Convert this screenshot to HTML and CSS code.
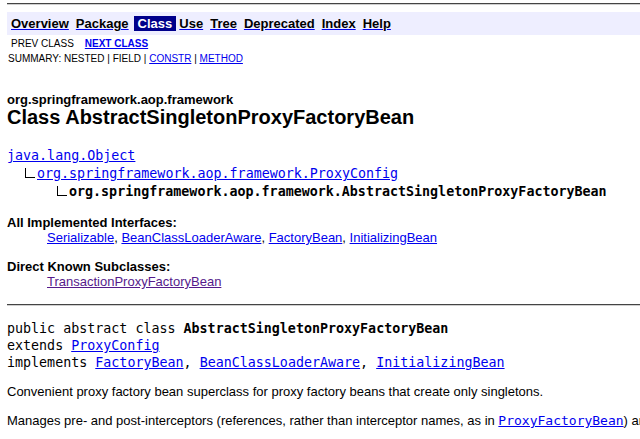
FILE: index.html
```html
<!DOCTYPE html>
<html>
<head>
<meta charset="utf-8">
<title>AbstractSingletonProxyFactoryBean</title>
<link rel="stylesheet" href="styles.css">
</head>
<body>
<div class="page">
  <hr class="rule rule-top">
  <nav class="navbar">
    <a class="nav-link" href="#"><span>Overview</span></a>
    <a class="nav-link" href="#"><span>Package</span></a>
    <span class="nav-cur">Class</span>
    <a class="nav-link" href="#"><span>Use</span></a>
    <a class="nav-link" href="#"><span>Tree</span></a>
    <a class="nav-link" href="#"><span>Deprecated</span></a>
    <a class="nav-link" href="#"><span>Index</span></a>
    <a class="nav-link" href="#"><span>Help</span></a>
  </nav>
  <div class="subnav">
    <span>PREV CLASS</span>
    <a class="next" href="#">NEXT CLASS</a>
  </div>
  <div class="summary">SUMMARY:&nbsp;NESTED&nbsp;|&nbsp;FIELD&nbsp;|&nbsp;<a href="#">CONSTR</a>&nbsp;|&nbsp;<a href="#">METHOD</a></div>

  <div class="pkg">org.springframework.aop.framework</div>
  <h2 class="title">Class AbstractSingletonProxyFactoryBean</h2>

  <div class="tree">
    <div class="tree-row"><a href="#">java.lang.Object</a></div>
    <div class="tree-row tree-l1"><span class="elbow"></span><a href="#">org.springframework.aop.framework.ProxyConfig</a></div>
    <div class="tree-row tree-l2"><span class="elbow"></span><b>org.springframework.aop.framework.AbstractSingletonProxyFactoryBean</b></div>
  </div>

  <dl class="meta">
    <dt>All Implemented Interfaces:</dt>
    <dd><a href="#">Serializable</a>, <a href="#">BeanClassLoaderAware</a>, <a href="#">FactoryBean</a>, <a href="#">InitializingBean</a></dd>
  </dl>
  <dl class="meta meta-next">
    <dt>Direct Known Subclasses:</dt>
    <dd><a class="visited" href="#">TransactionProxyFactoryBean</a></dd>
  </dl>

  <hr class="rule rule-mid">

  <div class="decl">
    <div>public abstract class <b>AbstractSingletonProxyFactoryBean</b></div>
    <div>extends <a href="#">ProxyConfig</a></div>
    <div>implements <a href="#">FactoryBean</a>, <a href="#">BeanClassLoaderAware</a>, <a href="#">InitializingBean</a></div>
  </div>

  <p class="desc">Convenient proxy factory bean superclass for proxy factory beans that create only singletons.</p>
  <p class="desc desc-2">Manages pre- and post-interceptors (references, rather than interceptor names, as in <a class="code" href="#">ProxyFactoryBean</a>) and provides consistent interface management.</p>
</div>
</body>
</html>
```

FILE: styles.css
```css
html, body {
  margin: 0;
  padding: 0;
  background: #ffffff;
  overflow: hidden;
}

.page {
  width: 1000px;
  padding-left: 7px;
  font-family: "Liberation Sans", Arial, sans-serif;
  font-size: 13px;
  color: #000000;
}

a {
  color: #0000ee;
  text-decoration: underline;
}

.rule {
  margin: 0;
  height: 0;
  border: 0;
  border-top: 1px solid #444444;
  border-bottom: 1px solid #cfcfcf;
}

.rule-top {
  margin-top: 3px;
}

.navbar {
  display: flex;
  margin-top: 7px;
  padding: 4px 0 4px 4px;
  background: #eeeeff;
  font-weight: bold;
  font-size: 13px;
  line-height: 15px;
}

.nav-link {
  margin-right: 7px;
}

.nav-link span {
  color: #000000;
}

.nav-cur {
  margin: 0 3px 0 -2px;
  padding: 0 4px;
  background: #00008b;
  color: #ffffff;
}

.subnav {
  display: flex;
  margin-top: 1px;
  padding-left: 4px;
  font-size: 10px;
  line-height: 15px;
}

.next {
  margin-left: 11px;
  font-weight: bold;
}

.summary {
  padding-left: 1px;
  font-size: 10px;
  line-height: 15px;
}

.pkg {
  margin-top: 26px;
  font-weight: bold;
  line-height: 15px;
}

.title {
  margin: 0;
  font-size: 20px;
  line-height: 20px;
  font-weight: bold;
}

.tree {
  margin-top: 20px;
  font-family: "DejaVu Sans Mono", monospace;
  font-size: 13.33px;
}

.tree-row {
  display: flex;
  align-items: flex-end;
  height: 18px;
  line-height: 18px;
  white-space: pre;
}

.tree-l1 {
  padding-left: 16px;
}

.tree-l2 {
  height: 17px;
  line-height: 17px;
  padding-left: 48px;
}

.elbow {
  display: block;
  flex: none;
  width: 14px;
  height: 14px;
  position: relative;
  align-self: center;
}

.elbow::before {
  content: "";
  position: absolute;
  left: 2px;
  top: 1px;
  width: 9px;
  height: 9px;
  border-left: 1px solid #000;
  border-bottom: 1px solid #000;
}

.meta {
  margin: 15px 0 0 0;
  line-height: 15px;
}

.meta dt {
  font-weight: bold;
}

.meta dd {
  margin: 0 0 0 40px;
}

.meta-next {
  margin-top: 14px;
}

.visited {
  color: #551a8b;
}

.rule-mid {
  margin-top: 15px;
}

.decl {
  margin-top: 14px;
  font-family: "DejaVu Sans Mono", monospace;
  font-size: 13.33px;
  line-height: 17px;
  white-space: nowrap;
}

.desc {
  margin: 13px 0 0 0;
  font-size: 13px;
  line-height: 15px;
  white-space: nowrap;
}

.desc-2 {
  margin-top: 14px;
}

.code {
  font-family: "DejaVu Sans Mono", monospace;
  font-size: 13px;
}
```
